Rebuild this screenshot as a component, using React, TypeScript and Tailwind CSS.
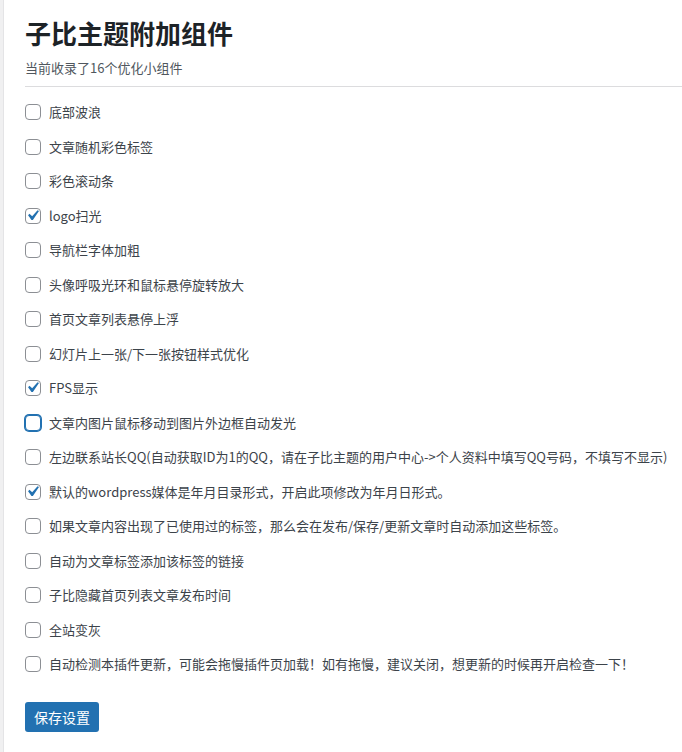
import { useState } from "react";

const items = [
  "底部波浪",
  "文章随机彩色标签",
  "彩色滚动条",
  "logo扫光",
  "导航栏字体加粗",
  "头像呼吸光环和鼠标悬停旋转放大",
  "首页文章列表悬停上浮",
  "幻灯片上一张/下一张按钮样式优化",
  "FPS显示",
  "文章内图片鼠标移动到图片外边框自动发光",
  "左边联系站长QQ(自动获取ID为1的QQ，请在子比主题的用户中心->个人资料中填写QQ号码，不填写不显示)",
  "默认的wordpress媒体是年月目录形式，开启此项修改为年月日形式。",
  "如果文章内容出现了已使用过的标签，那么会在发布/保存/更新文章时自动添加这些标签。",
  "自动为文章标签添加该标签的链接",
  "子比隐藏首页列表文章发布时间",
  "全站变灰",
  "自动检测本插件更新，可能会拖慢插件页加载！如有拖慢，建议关闭，想更新的时候再开启检查一下！",
];

export default function App() {
  const [checked, setChecked] = useState<boolean[]>(items.map((_, i) => i === 3 || i === 8 || i === 11));
  const focused = 9;

  const toggle = (i: number) => setChecked((c) => c.map((v, j) => (j === i ? !v : v)));

  return (
    <div
      className="min-h-[752px] bg-[#f0f0f1] pl-[3px]"
      style={{ fontFamily: '"Segoe UI", "Noto Sans CJK SC", "Noto Sans", sans-serif' }}
    >
      <div className="min-h-[752px] bg-white pl-[21px] pt-[15px] border-l border-[#e4e4e6]">
        <h1 className="text-[26px] leading-[36px] font-bold text-[#1d2327]">子比主题附加组件</h1>
        <p className="mt-[7px] text-[13px] leading-[20px] text-[#50575e]">当前收录了16个优化小组件</p>
        <hr className="mt-[8px] border-0 border-t border-[#dcdcde]" />

        <div className="mt-[8px]">
          {items.map((label, i) => (
            <label key={i} className="flex h-[34.5px] items-center gap-[8px] cursor-pointer">
              <span className="relative flex h-4 w-4 shrink-0">
                <input
                  type="checkbox"
                  checked={checked[i]}
                  onChange={() => toggle(i)}
                  className={
                    i === focused
                      ? "h-4 w-4 appearance-none rounded-[4px] border border-[#2271b1] bg-white shadow-[0_0_0_1px_#2271b1]"
                      : "h-4 w-4 appearance-none rounded-[4px] border border-[#8c8f94] bg-white"
                  }
                />
                {checked[i] && (
                  <svg
                    viewBox="0 0 20 20"
                    className="pointer-events-none absolute left-[-3px] top-[-3px] h-[21px] w-[21px]"
                  >
                    <path fill="#2271b1" d="M14.83 4.89l1.34.94-5.81 8.38H9.02L5.78 9.67l1.34-1.25 2.57 2.4z" />
                  </svg>
                )}
              </span>
              <span className="whitespace-nowrap text-[13px] leading-[20px] text-[#3c434a]">{label}</span>
            </label>
          ))}
        </div>

        <button className="mt-[20px] h-[30px] rounded-[3px] bg-[#2271b1] px-[9px] text-[14px] leading-[28px] text-white">
          保存设置
        </button>
      </div>
    </div>
  );
}
